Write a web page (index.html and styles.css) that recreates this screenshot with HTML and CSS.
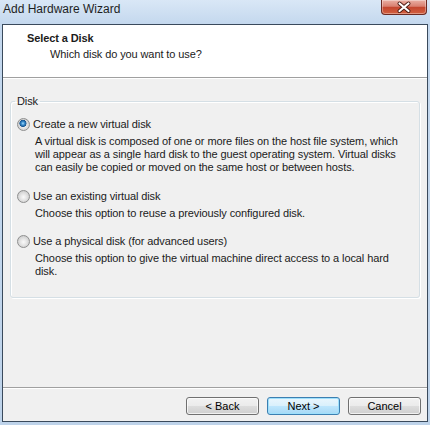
FILE: index.html
```html
<!DOCTYPE html>
<html lang="en">
<head>
    <meta charset="UTF-8">
    <title>Add Hardware Wizard</title>
    <link rel="stylesheet" href="styles.css">
</head>
<body>

<div class="window">
    <div class="titlebar">
        <span class="title">Add Hardware Wizard</span>
        <button class="close-btn" title="Close">
            <svg width="44" height="14" viewBox="0 0 44 14">
                <path d="M17.5 3.5 L26.5 11 M26.5 3.5 L17.5 11" stroke="#4a1a12" stroke-width="4" stroke-linecap="round"/>
                <path d="M17.5 3.5 L26.5 11 M26.5 3.5 L17.5 11" stroke="#fff" stroke-width="2.2" stroke-linecap="round"/>
            </svg>
        </button>
    </div>

    <div class="client">
        <div class="header">
            <div class="header-title">Select a Disk</div>
            <div class="header-sub">Which disk do you want to use?</div>
        </div>

        <fieldset class="group">
            <legend>Disk</legend>

            <div class="option">
                <label class="option-label"><input type="radio" name="disk" checked> Create a new virtual disk</label>
                <p class="option-desc">A virtual disk is composed of one or more files on the host file system, which<br>will appear as a single hard disk to the guest operating system. Virtual disks<br>can easily be copied or moved on the same host or between hosts.</p>
            </div>

            <div class="option option-2">
                <label class="option-label"><input type="radio" name="disk"> Use an existing virtual disk</label>
                <p class="option-desc">Choose this option to reuse a previously configured disk.</p>
            </div>

            <div class="option option-3">
                <label class="option-label"><input type="radio" name="disk"> Use a physical disk (for advanced users)</label>
                <p class="option-desc">Choose this option to give the virtual machine direct access to a local hard<br>disk.</p>
            </div>
        </fieldset>

        <div class="footer">
            <button class="btn">&lt; Back</button>
            <button class="btn btn-default">Next &gt;</button>
            <button class="btn">Cancel</button>
        </div>
    </div>
</div>

</body>
</html>
```

FILE: styles.css
```css
body {
    margin: 0;
    padding: 0;
    font-family: 'Liberation Sans', Arial, sans-serif;
    font-size: 11px;
    color: #1b1b1b;
    background-color: #c3d7ed;
}

.window {
    width: 430px;
    height: 425px;
    display: flex;
    flex-direction: column;
    background: linear-gradient(#d9e7f6, #c4d8ee 24px, #bed3ea);
}

.titlebar {
    height: 24px;
    padding: 0 3px;
    display: flex;
    justify-content: space-between;
    align-items: flex-start;
}

.title {
    font-size: 12px;
    line-height: 16px;
    padding-top: 1px;
    color: #1e1e1e;
}

.close-btn {
    width: 46px;
    height: 15px;
    padding: 0;
    border: 1px solid #6b2a22;
    border-top: none;
    border-radius: 0 0 4px 4px;
    background: linear-gradient(#eab0a4, #d98070 45%, #c4462f 52%, #d2603f);
    box-shadow: inset 0 0 0 1px rgba(255, 255, 255, 0.35);
    display: flex;
    align-items: center;
    justify-content: center;
}

.close-btn svg {
    display: block;
}

.client {
    flex: 1;
    margin: 0 2px 3px;
    border: 1px solid #3a4a5c;
    background-color: #f0f0f0;
    letter-spacing: -0.1px;
    display: flex;
    flex-direction: column;
}

.header {
    height: 53px;
    box-sizing: border-box;
    padding: 6px 0 0 24px;
    background-color: #fff;
    border-bottom: 1px solid #a0a0a0;
    box-shadow: 0 1px 0 #fff;
}

.header-title {
    font-weight: bold;
    line-height: 14px;
}

.header-sub {
    margin-top: 2px;
    padding-left: 23px;
    line-height: 14px;
}

.group {
    margin: 17px 7px 0;
    padding: 10px 0 19px 6px;
    border: 1px solid #d5dfe5;
    border-radius: 3px;
    box-shadow: inset 1px 1px 0 #fff, 1px 1px 0 #fff;
}

.group legend {
    padding: 0 2px;
    margin-left: -2px;
    line-height: 13px;
}

.option-2 {
    margin-top: 16px;
}

.option-3 {
    margin-top: 15px;
}

.option-label {
    display: flex;
    align-items: center;
    gap: 3px;
    line-height: 13px;
}

.option-label input {
    appearance: none;
    -webkit-appearance: none;
    width: 13px;
    height: 13px;
    margin: 0;
    border: 1px solid #8e8f8f;
    border-radius: 50%;
    background: radial-gradient(circle at 50% 55%, #fafafa 0, #e6e6e6 3px, #cfcfcf 6px);
}

.option-label input:checked {
    background:
        radial-gradient(circle at 45% 40%, #a9dcfa 0, #3f93d3 1.5px, #17548f 3.3px, transparent 3.8px),
        radial-gradient(circle at 50% 55%, #fafafa 0, #e6e6e6 3px, #cfcfcf 6px);
}

.option-desc {
    margin: 4px 0 0 18px;
    line-height: 13px;
}

.footer {
    margin-top: auto;
    height: 34px;
    box-sizing: border-box;
    padding: 9px 6px 0;
    border-top: 1px solid #a0a0a0;
    box-shadow: inset 0 1px 0 #fff;
    display: flex;
    justify-content: flex-end;
    gap: 8px;
}

.btn {
    width: 73px;
    height: 18px;
    padding: 0;
    font-family: inherit;
    font-size: 11px;
    color: #000;
    border: 1px solid #707070;
    border-radius: 3px;
    background: linear-gradient(#f2f2f2, #ebebeb 50%, #dddddd 51%, #cfcfcf);
    box-shadow: inset 0 0 0 1px rgba(255, 255, 255, 0.7);
}

.btn-default {
    border-color: #3c7fb1;
    background: linear-gradient(#eaf6fd, #d9f0fc 50%, #bee6fd 51%, #a7d9f5);
    box-shadow: inset 0 0 0 1px #9ee0fc;
}
```
